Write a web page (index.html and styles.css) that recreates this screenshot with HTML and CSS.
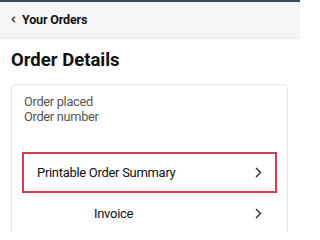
FILE: index.html
```html
<!DOCTYPE html>
<html>
<head>
<meta charset="utf-8">
<link rel="stylesheet" href="styles.css">
</head>
<body>
<div class="page">
<div class="topline"></div>
<header class="nav">
  <svg class="back" width="5" height="7" viewBox="0 0 5 7"><path d="M4 0.8 L1.2 3.5 L4 6.2" fill="none" stroke="#333" stroke-width="1.3"/></svg>
  <span class="nav-title">Your Orders</span>
</header>
<main class="content">
  <h1 class="title">Order Details</h1>
  <section class="card">
    <div class="meta">
      <div>Order placed</div>
      <div>Order number</div>
    </div>
    <a class="row row-highlight">
      <span>Printable Order Summary</span>
      <svg class="chev" width="7" height="11" viewBox="0 0 7 11"><path d="M1 1 L5.5 5.5 L1 10" fill="none" stroke="#222" stroke-width="1.3"/></svg>
    </a>
    <a class="row row-invoice">
      <span class="invoice">Invoice</span>
      <svg class="chev" width="7" height="11" viewBox="0 0 7 11"><path d="M1 1 L5.5 5.5 L1 10" fill="none" stroke="#222" stroke-width="1.3"/></svg>
    </a>
  </section>
</main>
</div>
</body>
</html>
```
FILE: styles.css
```css
html, body {
  margin: 0;
  padding: 0;
  background: #fff;
  font-family: Roboto, "Liberation Sans", sans-serif;
  color: #111;
}
.page {
  width: 300px;
  height: 232px;
  overflow: hidden;
}
.topline {
  height: 2px;
  background: #3e4856;
}
.nav {
  height: 35px;
  background: #f6f6f7;
  border-bottom: 2px solid #f0f0f1;
  display: flex;
  align-items: center;
  padding-left: 11px;
  gap: 6px;
}
.nav-title {
  font-size: 12.5px;
  font-weight: 700;
  letter-spacing: -0.15px;
  color: #111;
}
.content {
  padding: 0 11px;
}
.title {
  margin: 0;
  padding-top: 7px;
  font-size: 18.5px;
  font-weight: 700;
  line-height: 28px;
  color: #111;
}
.card {
  margin-top: 10px;
  margin-right: 1px;
  border: 1px solid #e4e4e4;
  border-radius: 5px;
  padding: 9px 10px 0 10px;
  height: 200px;
}
.meta {
  font-size: 12.8px;
  line-height: 15px;
  letter-spacing: -0.3px;
  color: #555;
  padding-left: 2px;
}
.row {
  display: flex;
  align-items: center;
  justify-content: space-between;
  height: 37px;
  font-size: 13px;
  letter-spacing: -0.3px;
  color: #111;
  padding: 0 13px;
}
.row-highlight {
  margin-top: 28px;
  border: 2px solid #d9394e;
}
.row-invoice {
  border: 2px solid transparent;
}
.invoice {
  margin-left: 57px;
}
```
